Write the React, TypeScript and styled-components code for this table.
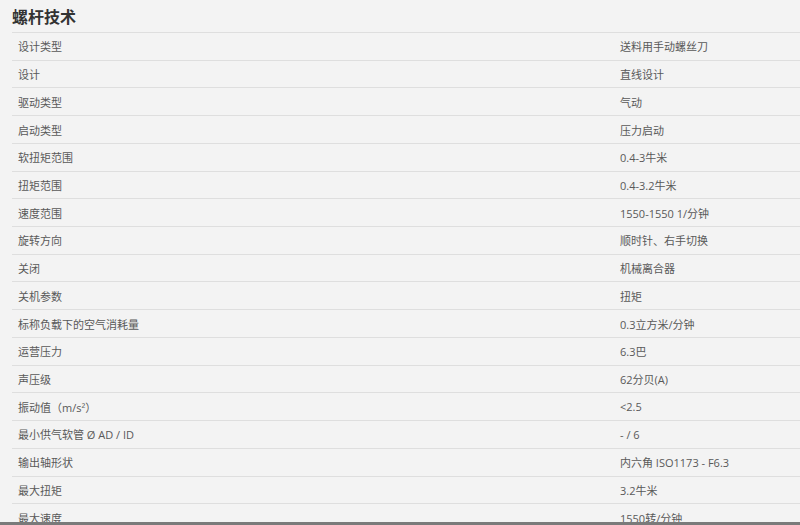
import React from "react";
import styled, { createGlobalStyle } from "styled-components";

const Global = createGlobalStyle`
  html, body { margin: 0; padding: 0; background: #f3f3f3; overflow: hidden; }
  body { font-family: "Open Sans", "Noto Sans CJK SC", sans-serif; }
`;

const Page = styled.div`
  width: 800px;
  height: 525px;
  overflow: hidden;
  background: #f3f3f3;
  padding-left: 12px;
  box-sizing: border-box;
`;

const Title = styled.h2`
  margin: 0;
  height: 32px;
  display: flex;
  align-items: center;
  font-family: "Noto Sans CJK SC", sans-serif;
  font-size: 16px;
  font-weight: 700;
  color: #333;
`;

const Table = styled.div`
  display: flex;
  flex-direction: column;
`;

const Row = styled.div`
  display: grid;
  grid-template-columns: 602px 1fr;
  height: 27.72px;
  align-items: center;
  border-top: 1px solid #dedede;
  box-sizing: border-box;
  font-size: 11px;
  color: #595959;
`;

const Cell = styled.div`
  padding-left: 6px;
  white-space: nowrap;
  font-family: "Open Sans", "Noto Sans CJK SC", sans-serif;
`;

const BottomEdge = styled.div`
  position: fixed;
  left: 0;
  right: 0;
  bottom: 0;
  height: 3px;
  background: #7a7a7a;
`;

const rows: [string, string][] = [
  ["设计类型", "送料用手动螺丝刀"],
  ["设计", "直线设计"],
  ["驱动类型", "气动"],
  ["启动类型", "压力启动"],
  ["软扭矩范围", "0.4-3牛米"],
  ["扭矩范围", "0.4-3.2牛米"],
  ["速度范围", "1550-1550 1/分钟"],
  ["旋转方向", "顺时针、右手切换"],
  ["关闭", "机械离合器"],
  ["关机参数", "扭矩"],
  ["标称负载下的空气消耗量", "0.3立方米/分钟"],
  ["运营压力", "6.3巴"],
  ["声压级", "62分贝(A)"],
  ["振动值（m/s²）", "<2.5"],
  ["最小供气软管 Ø AD / ID", "- / 6"],
  ["输出轴形状", "内六角 ISO1173 - F6.3"],
  ["最大扭矩", "3.2牛米"],
  ["最大速度", "1550转/分钟"],
];

export default function App() {
  return (
    <Page>
      <Global />
      <Title>螺杆技术</Title>
      <Table>
        {rows.map(([k, v]) => (
          <Row key={k}>
            <Cell>{k}</Cell>
            <Cell>{v}</Cell>
          </Row>
        ))}
      </Table>
      <BottomEdge />
    </Page>
  );
}
